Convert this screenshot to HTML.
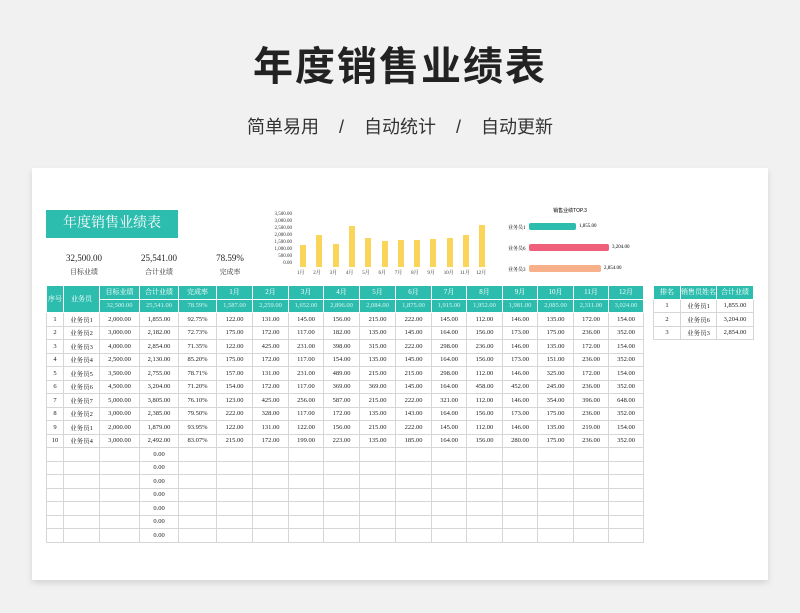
<!DOCTYPE html>
<html><head><meta charset="utf-8"><style>
*{margin:0;padding:0;box-sizing:border-box}
body{width:800px;height:613px;background:#f1f1f1;position:relative;overflow:hidden;font-family:"Liberation Serif","Noto Serif CJK SC",serif}
.title{position:absolute;top:34px;left:0;width:800px;text-align:center;font:bold 40px "Liberation Sans","Noto Sans CJK SC",sans-serif;color:#222;letter-spacing:2px}
.sub{position:absolute;top:113px;left:0;width:800px;text-align:center;font:18px "Liberation Sans","Noto Sans CJK SC",sans-serif;color:#333;word-spacing:0}
.card{position:absolute;left:32px;top:168px;width:736px;height:412px;background:#fff;box-shadow:0 3px 6px rgba(0,0,0,.12)}
.a{position:absolute}
.banner{left:46px;top:210px;width:132px;height:28px;background:#2dbdae;color:#fff;font-size:14px;text-align:center;line-height:28px}
.k{font-size:9px;color:#222;text-align:center;width:80px}
.kl{font-size:7px;color:#333;text-align:center;width:80px}
table{border-collapse:collapse;position:absolute;table-layout:fixed}
td{border:1px solid #d6d6d6;font-size:6.5px;text-align:center;height:13.5px;color:#222;white-space:nowrap;overflow:hidden;padding:0}
tr.h td{background:#2dbdae;color:#fff;border-color:#fff;font-size:7px}
tr.h2 td{background:#2dbdae;color:#d8f3f0;border-color:#fff}
.ax{font-size:5px;color:#333;position:absolute}
.bar{position:absolute;background:#fbd55a;width:6px;bottom:0}
</style></head><body>
<div class="title">年度销售业绩表</div>
<div class="sub">简单易用&nbsp;&nbsp;&nbsp;&nbsp;/&nbsp;&nbsp;&nbsp;&nbsp;自动统计&nbsp;&nbsp;&nbsp;&nbsp;/&nbsp;&nbsp;&nbsp;&nbsp;自动更新</div>
<div class="card"></div>
<div class="a banner">年度销售业绩表</div>
<div class="a k" style="left:44px;top:253px">32,500.00</div>
<div class="a kl" style="left:44px;top:267px">目标业绩</div>
<div class="a k" style="left:119px;top:253px">25,541.00</div>
<div class="a kl" style="left:119px;top:267px">合计业绩</div>
<div class="a k" style="left:190px;top:253px">78.59%</div>
<div class="a kl" style="left:190px;top:267px">完成率</div>
<div id="chart" class="a" style="left:265px;top:212px;width:230px;height:70px"></div>
<div class="a" style="left:530px;top:207px;font-size:5px;width:80px;text-align:center;font-family:'Liberation Sans','Noto Sans CJK SC',sans-serif">销售业绩TOP.3</div>
<div class="a" style="left:508px;top:224px;font-size:5px">业务员1</div>
<div class="a" style="left:529px;top:223px;width:47px;height:7px;background:#2dbdae;border-radius:2px"></div>
<div class="a" style="left:579px;top:224px;font-size:5px">1,855.00</div>
<div class="a" style="left:508px;top:245px;font-size:5px">业务员6</div>
<div class="a" style="left:529px;top:244px;width:80px;height:7px;background:#f0607a;border-radius:2px"></div>
<div class="a" style="left:612px;top:245px;font-size:5px">3,204.00</div>
<div class="a" style="left:508px;top:266px;font-size:5px">业务员3</div>
<div class="a" style="left:529px;top:265px;width:72px;height:7px;background:#f8b08a;border-radius:2px"></div>
<div class="a" style="left:604px;top:266px;font-size:5px">2,854.00</div>
<table id="t" style="left:46px;top:285px;width:597px"></table>
<table style="left:653px;top:285px;width:100px">
<colgroup><col style="width:27px"><col style="width:36px"><col style="width:37px"></colgroup>
<tr class="h"><td>排名</td><td>销售员姓名</td><td>合计业绩</td></tr>
<tr><td>1</td><td>业务员1</td><td>1,855.00</td></tr>
<tr><td>2</td><td>业务员6</td><td>3,204.00</td></tr>
<tr><td>3</td><td>业务员3</td><td>2,854.00</td></tr>
</table>
<script>
var w=[17,36,40,39,38,36,36,35,36,36,36,35,36,35,36,35,35];
var h='<colgroup>'+w.map(x=>'<col style="width:'+x+'px">').join('')+'</colgroup>';
var m=[];for(var i=1;i<=12;i++)m.push(i+'月');
var tot=['1,587.00','2,259.00','1,652.00','2,896.00','2,084.00','1,875.00','1,915.00','1,952.00','1,981.00','2,085.00','2,311.00','3,024.00'];
h+='<tr class="h"><td rowspan=2>序号</td><td rowspan=2>业务员</td><td>目标业绩</td><td>合计业绩</td><td>完成率</td>'+m.map(x=>'<td>'+x+'</td>').join('')+'</tr>';
h+='<tr class="h2"><td>32,500.00</td><td>25,541.00</td><td>78.59%</td>'+tot.map(x=>'<td>'+x+'</td>').join('')+'</tr>';
var d=[
[1,'业务员1','2,000.00','1,855.00','92.75%',122,131,145,156,215,222,145,112,146,135,172,154],
[2,'业务员2','3,000.00','2,182.00','72.73%',175,172,117,182,135,145,164,156,173,175,236,352],
[3,'业务员3','4,000.00','2,854.00','71.35%',122,425,231,398,315,222,298,236,146,135,172,154],
[4,'业务员4','2,500.00','2,130.00','85.20%',175,172,117,154,135,145,164,156,173,151,236,352],
[5,'业务员5','3,500.00','2,755.00','78.71%',157,131,231,489,215,215,298,112,146,325,172,154],
[6,'业务员6','4,500.00','3,204.00','71.20%',154,172,117,369,369,145,164,458,452,245,236,352],
[7,'业务员7','5,000.00','3,805.00','76.10%',123,425,256,587,215,222,321,112,146,354,396,648],
[8,'业务员2','3,000.00','2,385.00','79.50%',222,328,117,172,135,143,164,156,173,175,236,352],
[9,'业务员1','2,000.00','1,879.00','93.95%',122,131,122,156,215,222,145,112,146,135,219,154],
[10,'业务员4','3,000.00','2,492.00','83.07%',215,172,199,223,135,185,164,156,280,175,236,352]];
d.forEach(r=>{h+='<tr>'+r.map((v,i)=>'<td>'+(i>4?v+'.00':v)+'</td>').join('')+'</tr>'});
for(var j=0;j<7;j++){h+='<tr><td></td><td></td><td></td><td>0.00</td>'+'<td></td>'.repeat(13)+'</tr>'}
document.getElementById('t').innerHTML=h;
var c='',ys=['3,500.00','3,000.00','2,500.00','2,000.00','1,500.00','1,000.00','500.00','0.00'];
ys.forEach((y,i)=>{c+='<div class="ax" style="left:0;width:27px;text-align:right;top:'+(i*7)+'px">'+y+'</div>'});
c+='<div class="a" style="left:32px;top:3px;width:195px;height:52px">';
tot.forEach((t,i)=>{var v=parseFloat(t.replace(',',''));c+='<div class="bar" style="left:'+(3+i*16.3)+'px;height:'+(v/3500*49)+'px"></div>'});
c+='</div>';
m.forEach((x,i)=>{c+='<div class="ax" style="top:57px;left:'+(32+i*16.3)+'px">'+x+'</div>'});
document.getElementById('chart').innerHTML=c;
</script>
</body></html>
